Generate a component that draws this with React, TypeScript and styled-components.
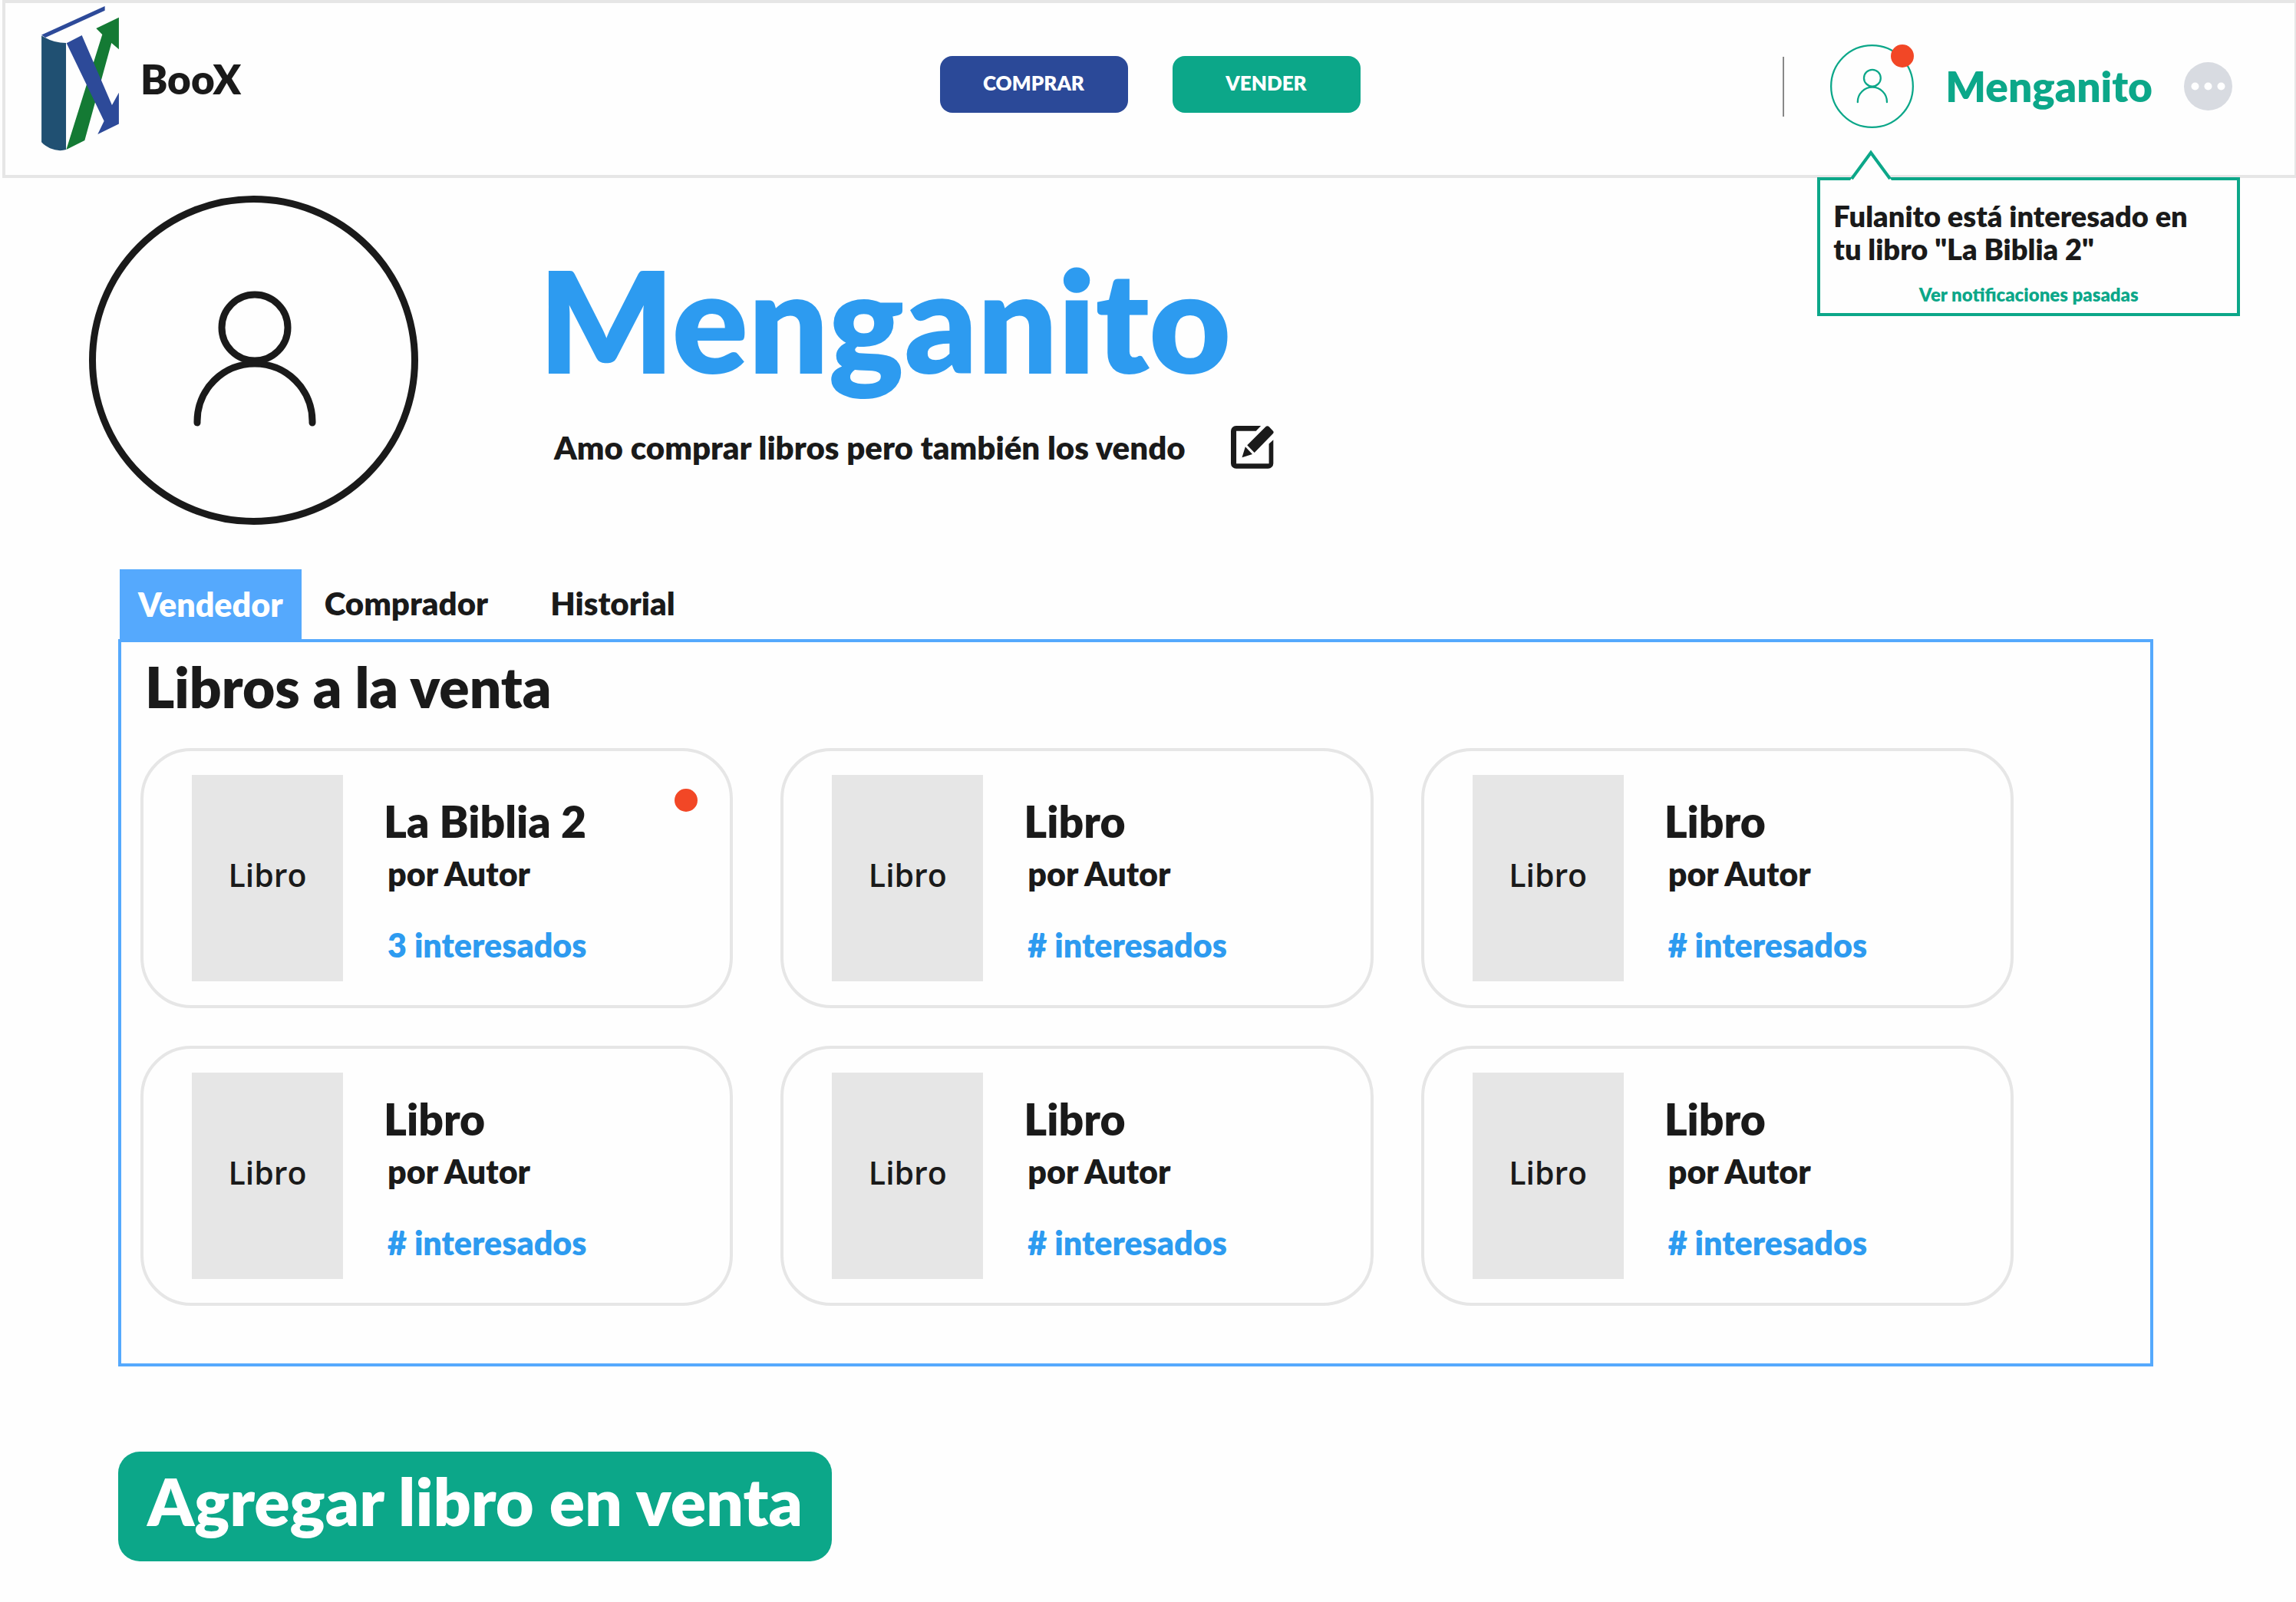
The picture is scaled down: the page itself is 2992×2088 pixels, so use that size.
import React, { useState } from "react";
import styled, { createGlobalStyle, css } from "styled-components";

const color = {
  ink: "#1a1a1a",
  green: "#0ca789",
  indigo: "#2b4998",
  blue: "#2d9bf0",
  frame: "#55a9fd",
  line: "#e6e6e6",
  alert: "#f24726",
};

const GlobalStyle = createGlobalStyle`
  *, *::before, *::after { box-sizing: border-box; }
  body {
    margin: 0;
    background: #fefefe;
    color: ${color.ink};
    font-family: Lato, "Open Sans", sans-serif;
    font-weight: 800;
  }
  h1, h2, h3, p { margin: 0; font-weight: 800; }
  button { font: inherit; border: 0; padding: 0; cursor: pointer; }
  a { color: inherit; text-decoration: none; }
  svg { display: block; }
`;

const Page = styled.div`
  padding-bottom: 52px;
`;

const Header = styled.header`
  display: grid;
  grid-template-columns: 1fr auto 1fr;
  align-items: start;
  height: 232px;
  margin-left: 3px;
  border: 4px solid ${color.line};
  border-right-width: 2px;
`;

const Brand = styled.a`
  display: flex;
  align-items: center;
  gap: 28px;
  padding: 4px 0 0 47px;
  font-size: 53px;
`;

const MainNav = styled.nav`
  display: flex;
  gap: 58px;
  padding-top: 69px;
`;

const NavButton = styled.button<{ $fill: string }>`
  width: 245px;
  height: 74px;
  padding-bottom: 4px;
  border-radius: 16px;
  background: ${(p) => p.$fill};
  color: #fff;
  font-size: 26px;
`;

const Account = styled.div`
  display: flex;
  align-items: center;
  justify-content: flex-end;
  gap: 41px;
  padding: 54px 81px 0 0;
`;

const Divider = styled.div`
  width: 2px;
  height: 78px;
  margin-right: 19px;
  background: #888;
`;

const Notifier = styled.div`
  position: relative;
`;

const AvatarButton = styled.button`
  display: block;
  background: none;
`;

const Dot = styled.span`
  position: absolute;
  width: 30px;
  height: 30px;
  border-radius: 50%;
  background: ${color.alert};
`;

const AvatarDot = styled(Dot)`
  top: 0;
  right: 0;
`;

const Tooltip = styled.aside`
  position: absolute;
  top: 173px;
  left: -17px;
  width: 551px;
  padding: 25px 17px 9px;
  border: 4px solid ${color.green};
  background: #fefefe;
`;

const TooltipArrow = styled.svg`
  position: absolute;
  top: -40px;
  left: 38px;
`;

const TooltipText = styled.p`
  max-width: 480px;
  font-size: 38px;
  line-height: 43px;
`;

const TooltipLink = styled.a`
  display: block;
  margin-top: 23px;
  color: ${color.green};
  font-size: 24px;
  line-height: 30px;
  text-align: center;
`;

const AccountName = styled.a`
  padding-bottom: 2px;
  color: ${color.green};
  font-size: 55px;
`;

const MoreButton = styled.button`
  background: none;
`;

const Profile = styled.section`
  display: flex;
  align-items: flex-start;
  gap: 157px;
  padding: 23px 116px 0;
`;

const ProfileText = styled.div`
  padding-top: 61px;
`;

const ProfileName = styled.h1`
  color: ${color.blue};
  font-size: 184px;
  line-height: 200px;
`;

const BioRow = styled.div`
  display: flex;
  align-items: center;
  gap: 59px;
  padding: 39px 0 0 20px;
`;

const Bio = styled.p`
  font-size: 42px;
  line-height: 52px;
`;

const EditButton = styled.button`
  background: none;
`;

const Shelf = styled.main`
  margin: 58px 186px 0 154px;
`;

const Tabs = styled.div`
  display: flex;
  padding-left: 2px;
`;

const Tab = styled.button<{ $active: boolean }>`
  height: 91px;
  ${(p) =>
    p.$active
      ? css`
          padding: 0 24px;
          background: ${color.frame};
          color: #fff;
          font-size: 43px;
        `
      : css`
          padding: 0 51px 4px 30px;
          background: none;
          color: ${color.ink};
          font-size: 42px;
        `}
`;

const Panel = styled.section`
  padding: 14px 178px 75px 25px;
  border: 4px solid ${color.frame};
`;

const PanelTitle = styled.h2`
  padding-left: 6px;
  font-size: 73px;
  line-height: 88px;
`;

const BookGrid = styled.div`
  display: grid;
  grid-template-columns: repeat(3, 1fr);
  gap: 49px 62px;
  margin-top: 36px;
`;

const Card = styled.article`
  position: relative;
  display: flex;
  gap: 53px;
  padding: 31px 40px 31px 63px;
  border: 4px solid ${color.line};
  border-radius: 66px;
`;

const CardDot = styled(Dot)`
  top: 49px;
  right: 42px;
`;

const Cover = styled.div`
  display: flex;
  align-items: center;
  justify-content: center;
  flex: none;
  width: 197px;
  height: 269px;
  padding-bottom: 10px;
  background: ${color.line};
  font-family: "Open Sans", "Noto Sans", sans-serif;
  font-size: 41px;
  font-weight: 600;
`;

const BookInfo = styled.div`
  padding-top: 25px;
`;

const BookTitle = styled.h3`
  font-size: 57px;
  line-height: 70px;
`;

const Author = styled.p`
  padding: 8px 0 0 5px;
  font-size: 43px;
  line-height: 52px;
`;

const Interested = styled.a`
  display: block;
  padding: 41px 0 0 5px;
  color: ${color.blue};
  font-size: 43px;
  line-height: 52px;
`;

const AddButton = styled.button`
  height: 143px;
  margin: 111px 0 0 154px;
  padding: 0 38px 16px;
  border-radius: 28px;
  background: ${color.green};
  color: #fff;
  font-size: 86px;
`;

function Logo() {
  return (
    <svg width="101" height="189" viewBox="162 24 303 568" aria-hidden="true">
      <path d="M162 140L176 147Q212 168 258 168V586C226 596 186 583 162 557Z" fill="#205072" />
      <path d="M162 137L410 24V41L177 147Z" fill="#2d4a99" />
      <path d="M259 586L400 135L376 111L465 68V193L436 168L331 550Z" fill="#147a34" />
      <path d="M260 169L320 138L438 412L465 363V485L382 526L407 474Z" fill="#2d4a99" />
    </svg>
  );
}

function PersonIcon({ size, stroke }: { size: number; stroke: string }) {
  return (
    <svg
      width={size}
      height={size}
      viewBox="0 0 429 429"
      fill="none"
      stroke={stroke}
      strokeWidth="9"
      strokeLinecap="round"
      aria-hidden="true"
    >
      <circle cx="214.5" cy="214.5" r="210" />
      <circle cx="216" cy="172" r="43" />
      <path d="M141 296V294A75 75 0 0 1 291 294V296" />
    </svg>
  );
}

function MoreIcon() {
  return (
    <svg width="63" height="63" viewBox="0 0 63 63" aria-hidden="true">
      <circle cx="31.5" cy="31.5" r="31.5" fill="#d8dbe1" />
      <circle cx="14.5" cy="31.5" r="5" fill="#fff" />
      <circle cx="31.5" cy="31.5" r="5" fill="#fff" />
      <circle cx="48.5" cy="31.5" r="5" fill="#fff" />
    </svg>
  );
}

function EditIcon() {
  return (
    <svg width="56" height="56" viewBox="30 32 166 166" fill={color.ink} aria-hidden="true">
      <path d="M127 52H51V178H177V102L194 86V177A20 20 0 0 1 174 197H50A20 20 0 0 1 30 177V52A20 20 0 0 1 50 32H146Z" />
      <path d="M93 107L165 35Q171 30 177 35L193 52Q197 56 193 62L121 136Z" />
      <path d="M86 113L113 142L73 154Z" />
    </svg>
  );
}

const books = [
  { title: "La Biblia 2", interested: "3", unread: true },
  { title: "Libro", interested: "#" },
  { title: "Libro", interested: "#" },
  { title: "Libro", interested: "#" },
  { title: "Libro", interested: "#" },
  { title: "Libro", interested: "#" },
];

const tabs = ["Vendedor", "Comprador", "Historial"];

export default function App() {
  const [active, setActive] = useState(tabs[0]);

  return (
    <Page>
      <GlobalStyle />
      <Header>
        <Brand href="#">
          <Logo />
          BooX
        </Brand>
        <MainNav>
          <NavButton $fill={color.indigo}>COMPRAR</NavButton>
          <NavButton $fill={color.green}>VENDER</NavButton>
        </MainNav>
        <Account>
          <Divider />
          <Notifier>
            <AvatarButton aria-label="Notificaciones">
              <PersonIcon size={109} stroke={color.green} />
            </AvatarButton>
            <AvatarDot />
            <Tooltip>
              <TooltipArrow width="56" height="40" viewBox="0 0 56 40" aria-hidden="true">
                <path d="M1 40L28 4L55 40Z" fill="#fefefe" />
                <path d="M3 38L28 4L53 38" fill="none" stroke={color.green} strokeWidth="4" />
              </TooltipArrow>
              <TooltipText>Fulanito está interesado en tu libro "La Biblia 2"</TooltipText>
              <TooltipLink href="#">Ver notificaciones pasadas</TooltipLink>
            </Tooltip>
          </Notifier>
          <AccountName href="#">Menganito</AccountName>
          <MoreButton aria-label="Más opciones">
            <MoreIcon />
          </MoreButton>
        </Account>
      </Header>

      <Profile>
        <PersonIcon size={429} stroke={color.ink} />
        <ProfileText>
          <ProfileName>Menganito</ProfileName>
          <BioRow>
            <Bio>Amo comprar libros pero también los vendo</Bio>
            <EditButton aria-label="Editar descripción">
              <EditIcon />
            </EditButton>
          </BioRow>
        </ProfileText>
      </Profile>

      <Shelf>
        <Tabs role="tablist">
          {tabs.map((name) => (
            <Tab
              key={name}
              role="tab"
              aria-selected={name === active}
              $active={name === active}
              onClick={() => setActive(name)}
            >
              {name}
            </Tab>
          ))}
        </Tabs>
        <Panel role="tabpanel">
          <PanelTitle>Libros a la venta</PanelTitle>
          <BookGrid>
            {books.map((book, i) => (
              <Card key={i}>
                <Cover>Libro</Cover>
                <BookInfo>
                  <BookTitle>{book.title}</BookTitle>
                  <Author>por Autor</Author>
                  <Interested href="#">{book.interested} interesados</Interested>
                </BookInfo>
                {book.unread && <CardDot />}
              </Card>
            ))}
          </BookGrid>
        </Panel>
      </Shelf>

      <AddButton>Agregar libro en venta</AddButton>
    </Page>
  );
}
